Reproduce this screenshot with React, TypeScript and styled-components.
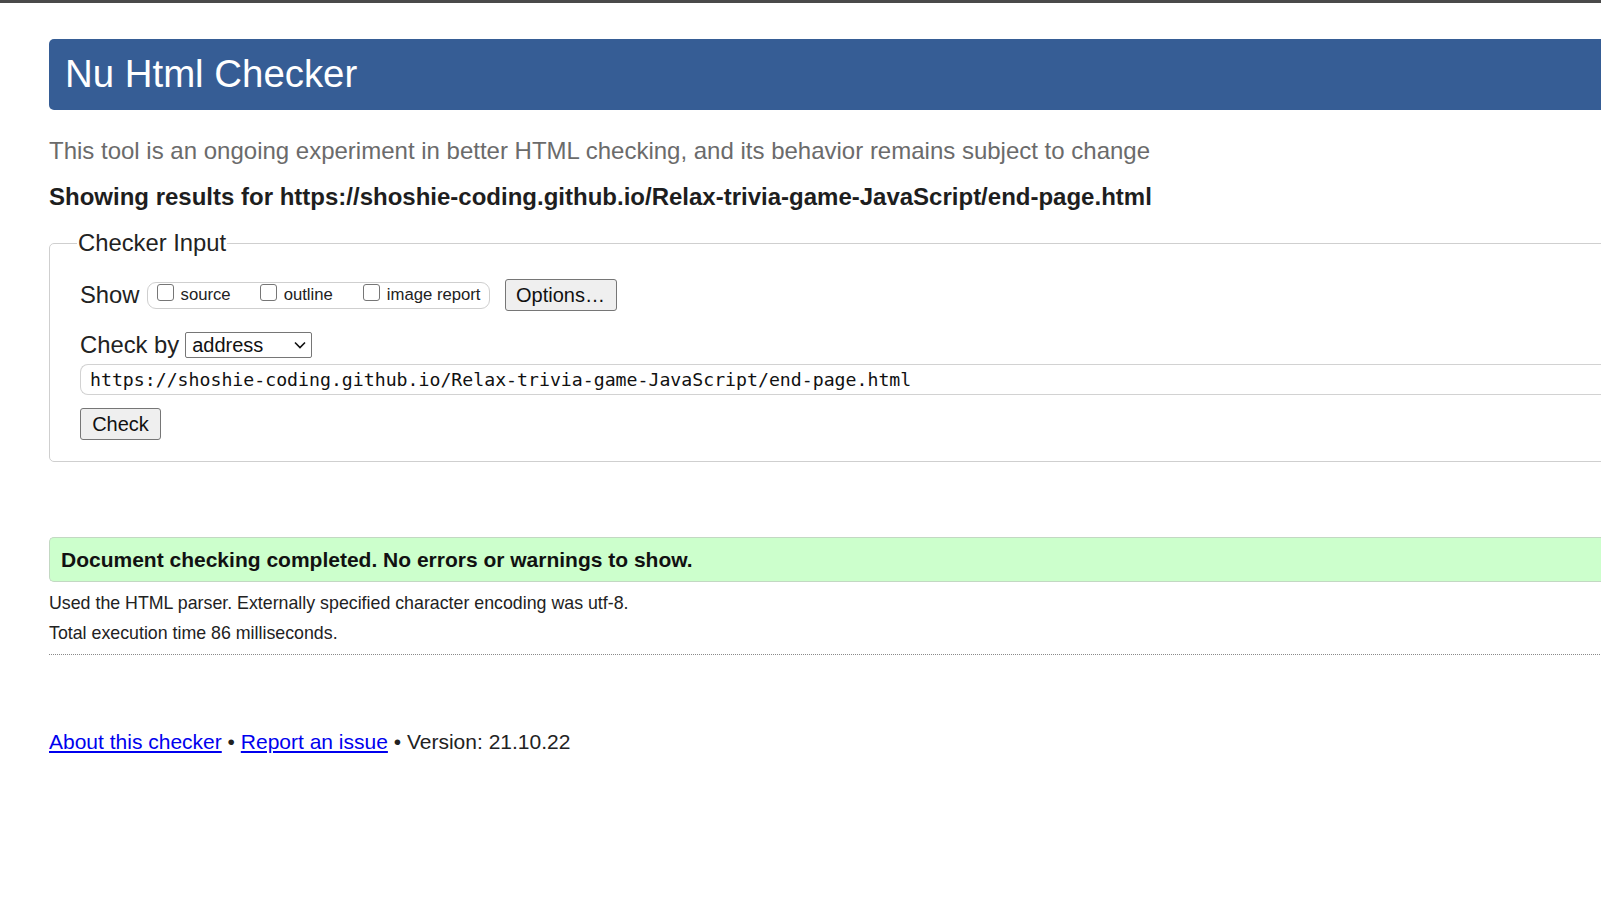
import React from "react";
import styled, { createGlobalStyle } from "styled-components";

const Global = createGlobalStyle`
  html, body { margin: 0; padding: 0; background: #fff; overflow: hidden; }
  body { font-family: "Liberation Sans", Arial, sans-serif; color: #222; }
`;

const TopBar = styled.div`
  height: 3px;
  background: #4a4a4a;
`;

const Main = styled.main`
  width: 1700px;
  padding-left: 49px;
  box-sizing: border-box;
`;

const Header = styled.header`
  margin-top: 36px;
  height: 71px;
  background: #365d95;
  border-radius: 5px 0 0 5px;
  padding-left: 16px;
  display: flex;
  align-items: center;
`;

const Title = styled.h1`
  margin: 0;
  font-weight: normal;
  font-size: 38.4px;
  color: #fff;
  line-height: 1;
`;

const Intro = styled.p`
  margin: 27px 0 0;
  font-size: 24px;
  line-height: 28px;
  color: #6b6b6b;
`;

const Showing = styled.p`
  margin: 18px 0 0;
  font-size: 24px;
  line-height: 28px;
  font-weight: bold;
  color: #1e1e1e;
`;

const Fieldset = styled.fieldset`
  margin: 18px 0 0;
  border: 1px solid #cfcfcf;
  border-radius: 5px;
  padding: 22px 0 21px 30px;
  min-width: 0;
`;

const Legend = styled.legend`
  font-size: 23.8px;
  line-height: 28px;
  padding: 0 1px;
  margin-left: -3px;
  color: #222;
`;

const Row = styled.div<{ $top?: number }>`
  display: flex;
  align-items: center;
  margin-top: ${(p) => p.$top ?? 0}px;
`;

const Label = styled.span<{ $gap?: number }>`
  font-size: 23.8px;
  line-height: 28px;
  margin-right: ${(p) => p.$gap ?? 0}px;
`;

const Group = styled.div`
  display: flex;
  align-items: center;
  height: 25px;
  border: 1px solid #cfcfcf;
  border-radius: 9px;
  padding: 0 8px 0 9px;
  margin-right: 15px;
`;

const CheckItem = styled.label<{ $gap?: number }>`
  display: flex;
  align-items: center;
  font-size: 16.7px;
  color: #222;
  margin-right: ${(p) => p.$gap ?? 0}px;
`;

const Box = styled.input`
  appearance: none;
  width: 17px;
  height: 17px;
  margin: -6px 7px 0 0;
  border: 1px solid #767676;
  border-radius: 3px;
  background: #fff;
  box-sizing: border-box;
`;

const Button = styled.button<{ $w: number }>`
  width: ${(p) => p.$w}px;
  height: 32px;
  padding: 0;
  font-family: "Liberation Sans", Arial, sans-serif;
  font-size: 20px;
  color: #111;
  background: #efefef;
  border: 1px solid #767676;
  border-radius: 3px;
`;

const SelectWrap = styled.div`
  position: relative;
  width: 127px;
  height: 26px;
`;

const Select = styled.select`
  appearance: none;
  width: 127px;
  height: 26px;
  margin: 0;
  padding: 0 0 0 6px;
  font-family: "Liberation Sans", Arial, sans-serif;
  font-size: 20px;
  color: #111;
  background: #fff;
  border: 1px solid #767676;
  border-radius: 2px;
  box-sizing: border-box;
`;

const Chevron = styled.svg`
  position: absolute;
  right: 6px;
  top: 9px;
  pointer-events: none;
`;

const UrlInput = styled.div`
  margin-top: 5px;
  height: 31px;
  border: 1px solid #d2d2d2;
  border-right: none;
  border-radius: 8px 0 0 8px;
  box-sizing: border-box;
  padding-left: 9px;
  display: flex;
  align-items: center;
  font-family: "DejaVu Sans Mono", "Liberation Mono", monospace;
  font-size: 18.2px;
  color: #111;
`;

const CheckRow = styled.div`
  margin-top: 13px;
`;

const Success = styled.div`
  margin-top: 75px;
  height: 45px;
  box-sizing: border-box;
  background: #ccffcc;
  border: 1px solid #c3d8c3;
  border-right: none;
  border-radius: 5px 0 0 5px;
  padding-left: 11px;
  display: flex;
  align-items: center;
  font-weight: bold;
  font-size: 21px;
  color: #111;
`;

const Info = styled.p<{ $top: number }>`
  margin: ${(p) => p.$top}px 0 0;
  font-size: 17.8px;
  line-height: 22px;
  color: #222;
`;

const Dotted = styled.hr`
  margin: 10px 0 0;
  border: none;
  border-top: 1px dotted #8a8a8a;
  height: 0;
`;

const Footer = styled.p`
  margin: 75px 0 0;
  font-size: 21px;
  line-height: 24px;
  color: #222;
`;

const Link = styled.a`
  color: #0000ee;
  text-decoration: underline;
`;

export default function App() {
  return (
    <>
      <Global />
      <TopBar />
      <Main>
        <Header>
          <Title>Nu Html Checker</Title>
        </Header>
        <Intro>
          This tool is an ongoing experiment in better HTML checking, and its behavior remains subject to change
        </Intro>
        <Showing>
          Showing results for https://shoshie-coding.github.io/Relax-trivia-game-JavaScript/end-page.html
        </Showing>
        <Fieldset>
          <Legend>Checker Input</Legend>
          <Row>
            <Label $gap={7}>Show</Label>
            <Group>
              <CheckItem $gap={29}>
                <Box type="checkbox" />
                source
              </CheckItem>
              <CheckItem $gap={30}>
                <Box type="checkbox" />
                outline
              </CheckItem>
              <CheckItem>
                <Box type="checkbox" />
                image report
              </CheckItem>
            </Group>
            <Button $w={112}>Options…</Button>
          </Row>
          <Row $top={20}>
            <Label $gap={6}>Check by</Label>
            <SelectWrap>
              <Select defaultValue="address">
                <option value="address">address</option>
              </Select>
              <Chevron width="12" height="8" viewBox="0 0 12 8">
                <path d="M1 1.5 L6 6.5 L11 1.5" fill="none" stroke="#111" strokeWidth="1.6" />
              </Chevron>
            </SelectWrap>
          </Row>
          <UrlInput>https://shoshie-coding.github.io/Relax-trivia-game-JavaScript/end-page.html</UrlInput>
          <CheckRow>
            <Button $w={81}>Check</Button>
          </CheckRow>
        </Fieldset>
        <Success>Document checking completed. No errors or warnings to show.</Success>
        <Info $top={10}>Used the HTML parser. Externally specified character encoding was utf-8.</Info>
        <Info $top={8}>Total execution time 86 milliseconds.</Info>
        <Dotted />
        <Footer>
          <Link href="#">About this checker</Link> • <Link href="#">Report an issue</Link> • Version: 21.10.22
        </Footer>
      </Main>
    </>
  );
}
